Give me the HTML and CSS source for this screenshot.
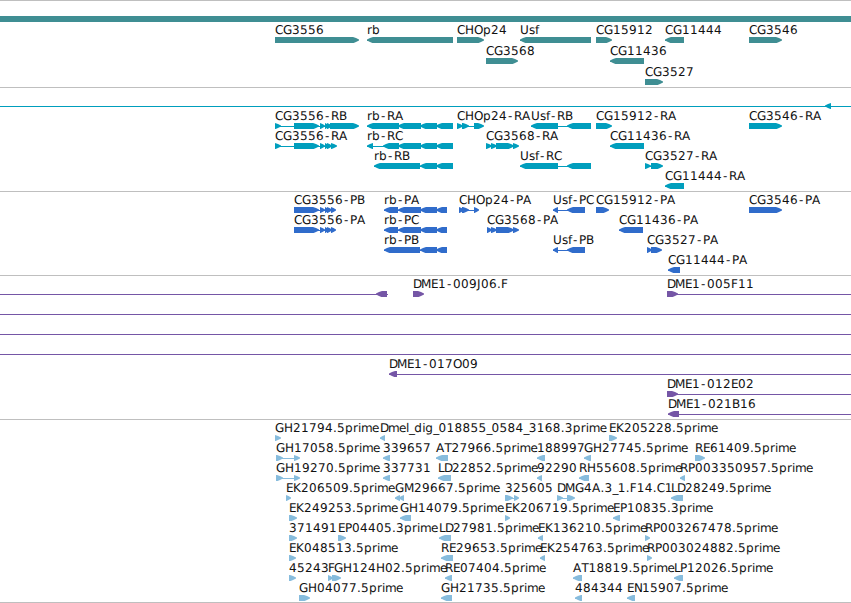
FILE: index.html
```html
<!DOCTYPE html>
<html lang="en">
<head>
  <meta charset="UTF-8">
  <meta name="viewport" content="width=device-width, initial-scale=1.0">
  <link rel="stylesheet" href="styles.css">
  <title>Genome tracks</title>
</head>
<body>
  <main class="browser">
    <section class="track gene" id="gene"></section>
    <section class="track transcript" id="transcript"></section>
    <section class="track protein" id="protein"></section>
    <section class="track clone" id="clone"></section>
    <section class="track est" id="est"></section>
  </main>
  <script src="tracks.js"></script>
</body>
</html>
```

FILE: styles.css
```css
body {
  margin: 0;
  background: #ffffff;
}

.browser {
  display: flex;
  flex-direction: column;
  width: 851px;
  border-bottom: 1px solid #bfbfbf;
}

.track {
  border-top: 1px solid #bfbfbf;
  overflow: hidden;
}

.track svg {
  display: block;
  width: 851px;
  height: 100%;
}

.track text {
  font-family: "DejaVu Sans", sans-serif;
  font-size: 12px;
  fill: #111111;
  text-rendering: geometricPrecision;
}

.gene {
  height: 86px;
  color: #3f8e93;
}

.transcript {
  height: 103px;
  color: #009ebd;
}

.protein {
  height: 83px;
  color: #306ccb;
}

.clone {
  height: 143px;
  color: #7556a6;
}

.est {
  height: 182px;
  color: #87bcdd;
}
```

FILE: tracks.js
```js
const NS = 'http://www.w3.org/2000/svg';

// label advances in pixels, digits and anything missing are 8
const ADVANCE = {
  A: 8.5, D: 8, E: 7, F: 7, G: 9, H: 9, J: 4, L: 6, M: 10, O: 9, P: 7, R: 8, T: 7, U: 9,
  e: 7, f: 4, i: 3, l: 3, m: 11, r: 5, s: 6, '.': 4, '_': 5.2, '-': 7
};

function add(svg, name, attrs) {
  const el = document.createElementNS(NS, name);
  for (const key in attrs) el.setAttribute(key, attrs[key]);
  svg.appendChild(el);
  return el;
}

function exon(svg, dir, a, b, y) {
  const tip = Math.min(6, b - a);
  const head = dir === '>' ? b : a;
  const tail = dir === '>' ? a : b;
  const k = dir === '>' ? -tip : tip;
  const points = [
    tail, y, head + k, y, head + k * 0.5, y + 1, head, y + 2.6,
    head, y + 3.4, head + k * 0.5, y + 5, head + k * 0.9, y + 6, tail, y + 6
  ];
  add(svg, 'polygon', { points: points.join(' '), fill: 'currentColor' });
}

// feature: [row, direction, label, exon bounds, line bounds, label x]
function draw(id, top, pitch, features) {
  const track = document.getElementById(id);
  const svg = document.createElementNS(NS, 'svg');
  track.appendChild(svg);
  if (id === 'gene') {
    add(svg, 'rect', { x: 0, y: 15, width: 851, height: 6, fill: 'currentColor' });
  }
  features.forEach(([row, dir, label, parts, line, labelX]) => {
    const y = top + row * pitch;
    const from = line ? line[0] : parts[0];
    const to = line ? line[1] : parts[parts.length - 1];
    add(svg, 'rect', { x: from, y: y + 3, width: to - from - (line ? 0 : 1), height: 1, fill: 'currentColor' });
    for (let i = 0; i < parts.length; i += 2) exon(svg, dir, parts[i], parts[i + 1], y);
    if (label) {
      let x = labelX || parts[0];
      const xs = [];
      for (const ch of label) {
        xs.push(ch === '-' ? x + 1 : x);
        x += ADVANCE[ch] || 8;
      }
      add(svg, 'text', { x: xs.join(' '), y: y - 3 }).textContent = label;
    }
  });
}

draw('gene', 36, 21, [
  [0, '>', 'CG3556', [275, 359]],
  [0, '<', 'rb', [367, 453]],
  [0, '>', 'CHOp24', [457, 484]],
  [0, '<', 'Usf', [520, 591]],
  [0, '>', 'CG15912', [596, 612]],
  [0, '<', 'CG11444', [665, 684]],
  [0, '>', 'CG3546', [749, 782]],
  [1, '>', 'CG3568', [486, 518]],
  [1, '<', 'CG11436', [610, 644]],
  [2, '>', 'CG3527', [645, 663]]
]);

draw('transcript', 15, 20, [
  [0, '<', '', [825, 831], [0, 851]],
  [1, '>', 'CG3556-RB', [275, 281, 294, 319, 320, 325, 325, 329, 327, 332, 330, 359]],
  [1, '<', 'rb-RA', [367, 399, 398, 421, 420, 437, 436, 453]],
  [1, '>', 'CHOp24-RA', [457, 463, 462, 469, 474, 484]],
  [1, '<', 'Usf-RB', [531, 558, 567, 591]],
  [1, '>', 'CG15912-RA', [596, 612]],
  [1, '>', 'CG3546-RA', [749, 782]],
  [2, '>', 'CG3556-RA', [275, 281, 294, 319, 320, 325, 325, 329, 327, 332, 331, 337]],
  [2, '<', 'rb-RC', [367, 373, 383, 399, 398, 421, 420, 437, 436, 453]],
  [2, '>', 'CG3568-RA', [486, 492, 491, 497, 496, 514, 513, 519]],
  [2, '<', 'CG11436-RA', [610, 644]],
  [3, '<', 'rb-RB', [374, 420, 420, 437, 436, 453]],
  [3, '<', 'Usf-RC', [520, 558, 567, 591]],
  [3, '>', 'CG3527-RA', [645, 651, 651, 663]],
  [4, '<', 'CG11444-RA', [665, 684]]
]);

draw('protein', 15, 20, [
  [0, '>', 'CG3556-PB', [294, 319, 320, 325, 325, 329, 327, 332, 331, 336]],
  [0, '<', 'rb-PA', [384, 398, 398, 421, 420, 437, 436, 447]],
  [0, '>', 'CHOp24-PA', [459, 464, 462, 469, 474, 479]],
  [0, '<', 'Usf-PC', [553, 558, 567, 585]],
  [0, '>', 'CG15912-PA', [596, 609]],
  [0, '>', 'CG3546-PA', [749, 782]],
  [1, '>', 'CG3556-PA', [294, 319, 320, 325, 325, 329, 327, 332, 331, 336]],
  [1, '<', 'rb-PC', [384, 398, 398, 421, 420, 437, 436, 447]],
  [1, '>', 'CG3568-PA', [487, 492, 491, 497, 496, 514, 513, 519]],
  [1, '<', 'CG11436-PA', [619, 643]],
  [2, '<', 'rb-PB', [384, 420, 420, 437, 436, 447]],
  [2, '<', 'Usf-PB', [553, 558, 567, 585]],
  [2, '>', 'CG3527-PA', [647, 652, 651, 662]],
  [3, '<', 'CG11444-PA', [668, 680]]
]);

draw('clone', 15, 20, [
  [0, '<', '', [376, 387], [0, 388]],
  [0, '>', 'DME1-009J06.F', [413, 424]],
  [0, '>', 'DME1-005F11', [667, 678], [667, 851]],
  [1, '>', '', [], [0, 851]],
  [2, '>', '', [], [0, 851]],
  [3, '>', '', [], [0, 851]],
  [4, '<', 'DME1-017O09', [389, 397], [389, 851]],
  [5, '>', 'DME1-012E02', [667, 678], [667, 851]],
  [6, '<', 'DME1-021B16', [668, 679], [668, 851]]
]);

draw('est', 15, 20, [
  [0, '>', 'GH21794.5prime', [275, 281]],
  [0, '<', 'Dmel_dig_018855_0584_3168.3prime', [380, 385], null, 380],
  [0, '>', 'EK205228.5prime', [609, 617]],
  [1, '>', 'GH17058.5prime', [276, 283, 294, 300]],
  [1, '<', '339657', [383, 390]],
  [1, '<', 'AT27966.5prime', [436, 448]],
  [1, '<', '188997', [537, 545]],
  [1, '<', 'GH27745.5prime', [584, 591]],
  [1, '>', 'RE61409.5prime', [695, 705]],
  [2, '>', 'GH19270.5prime', [276, 283, 294, 300]],
  [2, '<', '337731', [383, 390]],
  [2, '<', 'LD22852.5prime', [438, 451]],
  [2, '<', '92290', [537, 542]],
  [2, '<', 'RH55608.5prime', [579, 589]],
  [2, '<', 'RP003350957.5prime', [680, 685]],
  [3, '>', 'EK206509.5prime', [286, 291]],
  [3, '<', 'GM29667.5prime', [395, 400, 399, 404]],
  [3, '>', '325605', [505, 513, 514, 519]],
  [3, '>', 'DMG4A.3_1.F14.C1', [557, 563, 567, 575]],
  [3, '<', 'LD28249.5prime', [671, 683]],
  [4, '>', 'EK249253.5prime', [289, 297]],
  [4, '<', 'GH14079.5prime', [400, 411]],
  [4, '>', 'EK206719.5prime', [505, 510]],
  [4, '<', 'EP10835.3prime', [613, 620]],
  [5, '>', '371491', [289, 297]],
  [5, '>', 'EP04405.3prime', [338, 346]],
  [5, '<', 'LD27981.5prime', [439, 451]],
  [5, '<', 'EK136210.5prime', [538, 543]],
  [5, '>', 'RP003267478.5prime', [645, 650]],
  [6, '>', 'EK048513.5prime', [289, 296]],
  [6, '<', 'RE29653.5prime', [441, 453]],
  [6, '<', 'EK254763.5prime', [540, 545]],
  [6, '>', 'RP003024882.5prime', [647, 652]],
  [7, '>', '45243', [289, 296]],
  [7, '>', 'F', [328, 333]],
  [7, '>', 'GH124H02.5prime', [332, 341], null, 334],
  [7, '<', 'RE07404.5prime', [445, 452]],
  [7, '<', 'AT18819.5prime', [573, 582]],
  [7, '<', 'LP12026.5prime', [674, 683]],
  [8, '>', 'GH04077.5prime', [299, 310]],
  [8, '<', 'GH21735.5prime', [441, 452]],
  [8, '<', '484344', [575, 582]],
  [8, '<', 'EN15907.5prime', [627, 635]]
]);
```
